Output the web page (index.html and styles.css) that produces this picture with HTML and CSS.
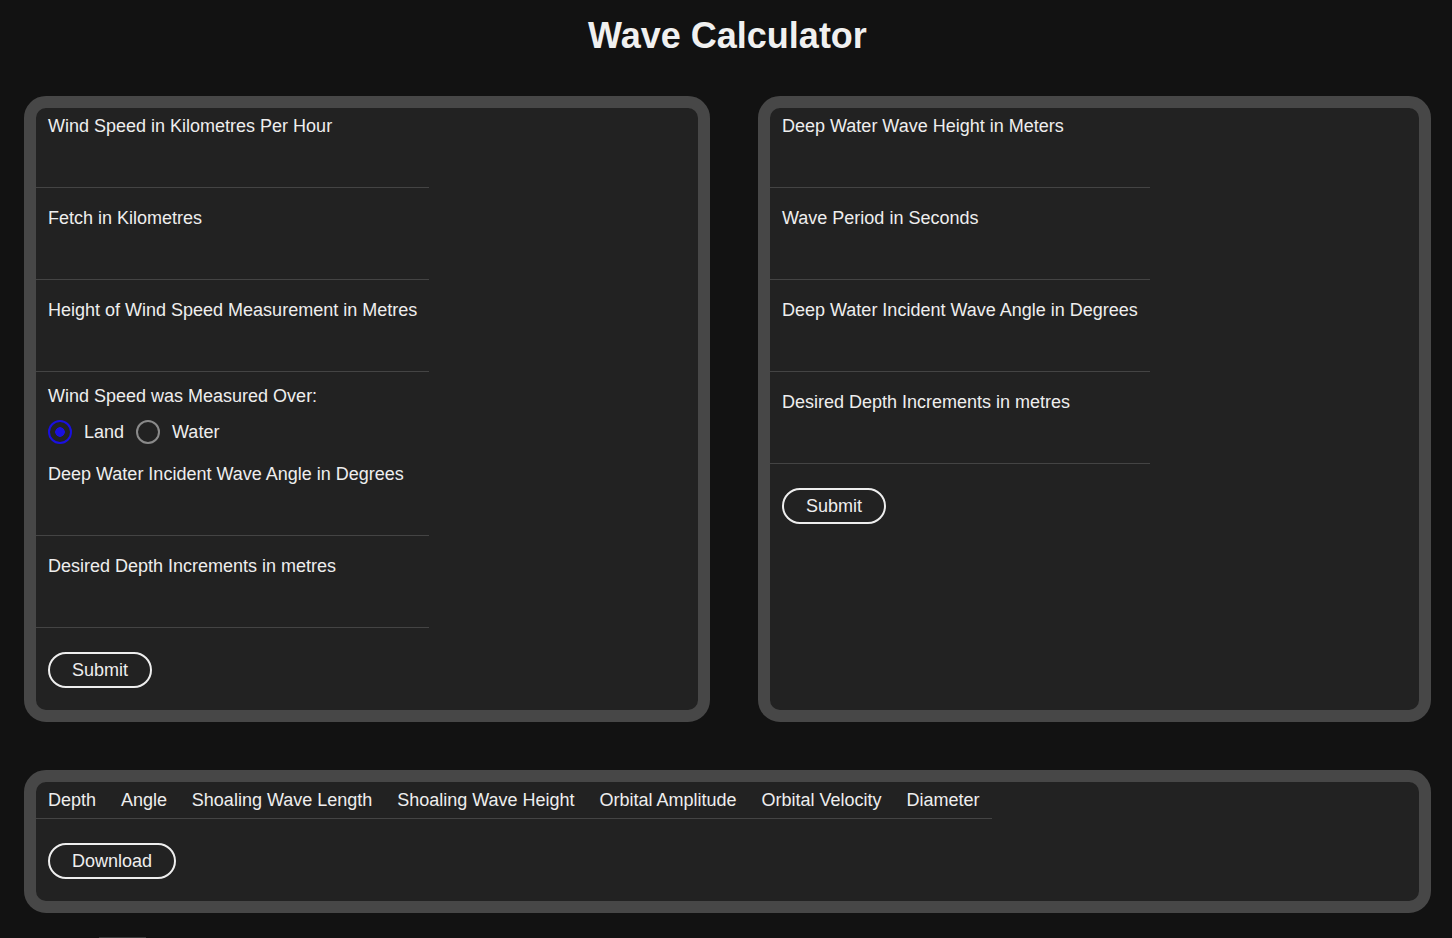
FILE: index.html
```html
<!DOCTYPE html>
<html lang="en">
<head>
<meta charset="utf-8">
<title>Wave Calculator</title>
<link rel="stylesheet" href="styles.css">
</head>
<body>
<h1 class="title">Wave Calculator</h1>

<main class="panels">
  <section class="panel">
    <form class="form">
      <div class="field">
        <label class="field-label">Wind Speed in Kilometres Per Hour</label>
        <input class="field-input" type="text">
      </div>
      <div class="field">
        <label class="field-label">Fetch in Kilometres</label>
        <input class="field-input" type="text">
      </div>
      <div class="field">
        <label class="field-label">Height of Wind Speed Measurement in Metres</label>
        <input class="field-input" type="text">
      </div>
      <div class="radio-group">
        <div class="field-label">Wind Speed was Measured Over:</div>
        <div class="radio-row">
          <input class="radio" type="radio" name="over" id="land" checked>
          <label for="land">Land</label>
          <input class="radio" type="radio" name="over" id="water">
          <label for="water">Water</label>
        </div>
      </div>
      <div class="field">
        <label class="field-label">Deep Water Incident Wave Angle in Degrees</label>
        <input class="field-input" type="text">
      </div>
      <div class="field">
        <label class="field-label">Desired Depth Increments in metres</label>
        <input class="field-input" type="text">
      </div>
      <button class="btn" type="button">Submit</button>
    </form>
  </section>

  <section class="panel">
    <form class="form">
      <div class="field">
        <label class="field-label">Deep Water Wave Height in Meters</label>
        <input class="field-input" type="text">
      </div>
      <div class="field">
        <label class="field-label">Wave Period in Seconds</label>
        <input class="field-input" type="text">
      </div>
      <div class="field">
        <label class="field-label">Deep Water Incident Wave Angle in Degrees</label>
        <input class="field-input" type="text">
      </div>
      <div class="field">
        <label class="field-label">Desired Depth Increments in metres</label>
        <input class="field-input" type="text">
      </div>
      <button class="btn" type="button">Submit</button>
    </form>
  </section>
</main>

<section class="panel results">
  <table class="table">
    <thead>
      <tr>
        <th>Depth</th>
        <th>Angle</th>
        <th>Shoaling Wave Length</th>
        <th>Shoaling Wave Height</th>
        <th>Orbital Amplitude</th>
        <th>Orbital Velocity</th>
        <th>Diameter</th>
      </tr>
    </thead>
    <tbody></tbody>
  </table>
  <button class="btn" type="button">Download</button>
</section>

<div class="below"></div>
</body>
</html>
```
FILE: styles.css
```css
html, body {
  margin: 0;
  padding: 0;
  background: #121212;
  color: #eeeeee;
  font-family: "Liberation Sans", Arial, Helvetica, sans-serif;
  font-size: 18px;
}

.title {
  margin: 15px 0 40px;
  padding-left: 3px;
  text-align: center;
  font-size: 36px;
  line-height: 41px;
  font-weight: 700;
  color: #f0f0f0;
}

.panels {
  display: grid;
  grid-template-columns: 686fr 673fr;
  gap: 48px;
  padding: 0 21px 0 24px;
}

.panel {
  background: #222222;
  border: 12px solid #474747;
  border-radius: 22px;
}

.form {
  width: fit-content;
  padding-bottom: 22px;
}

.field {
  padding: 8px 12px 0;
  border-bottom: 1px solid #444444;
}

.field + .field,
.radio-group + .field,
.field + .radio-group {
  margin-top: 12px;
}

.field-label {
  display: block;
  line-height: 21px;
  white-space: nowrap;
}

.field-input {
  display: block;
  width: 100%;
  height: 50px;
  box-sizing: border-box;
  margin: 0;
  padding: 0;
  border: none;
  background: transparent;
  color: #eeeeee;
  font: inherit;
  outline: none;
}

.radio-group {
  padding: 2px 12px 0;
}

.radio-row {
  display: flex;
  align-items: center;
  gap: 12px;
  margin-top: 13px;
  height: 24px;
  line-height: 21px;
}

.radio {
  appearance: none;
  -webkit-appearance: none;
  width: 24px;
  height: 24px;
  margin: 0;
  box-sizing: border-box;
  border: 2px solid #8a8a8a;
  border-radius: 50%;
  background: transparent;
}

.radio:checked {
  border-color: #1a10e0;
  background: radial-gradient(circle, #1a10e0 0 4.5px, transparent 5px);
}

.btn {
  display: block;
  margin: 24px 0 0 12px;
  padding: 6px 22px;
  border: 2px solid #eeeeee;
  border-radius: 20px;
  background: transparent;
  color: #eeeeee;
  font-family: inherit;
  font-size: 18px;
  line-height: 20px;
}

.results {
  margin: 48px 21px 0 24px;
  padding-bottom: 22px;
}

.table {
  border-collapse: collapse;
}

.table th {
  padding: 8px 12.45px 7px 12.45px;
  font-weight: 400;
  text-align: left;
  line-height: 21px;
  white-space: nowrap;
  border-bottom: 1px solid #444444;
}

.table th:first-child {
  padding-left: 12px;
}

.below {
  margin: 24px 0 0 99px;
  width: 47px;
  height: 1px;
  background: #3c3c3c;
}
```
